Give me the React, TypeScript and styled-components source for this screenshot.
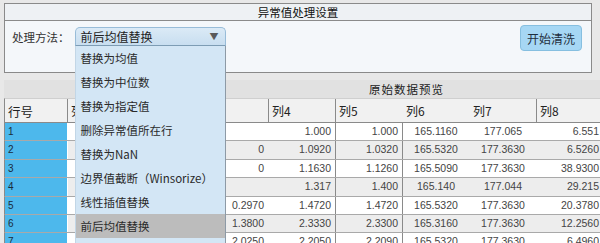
import React from 'react';
import styled, { createGlobalStyle } from 'styled-components';

const methods = [
  '替换为均值',
  '替换为中位数',
  '替换为指定值',
  '删除异常值所在行',
  '替换为NaN',
  '边界值截断（Winsorize）',
  '线性插值替换',
  '前后均值替换',
];

type Align = 'left' | 'center' | 'right';

const columns: { label: string; align: Align; headDivider: boolean; cellDivider: boolean }[] = [
  { label: '列1', align: 'right', headDivider: false, cellDivider: false },
  { label: '列2', align: 'right', headDivider: false, cellDivider: false },
  { label: '列3', align: 'right', headDivider: true, cellDivider: false },
  { label: '列4', align: 'right', headDivider: true, cellDivider: true },
  { label: '列5', align: 'right', headDivider: false, cellDivider: true },
  { label: '列6', align: 'center', headDivider: false, cellDivider: false },
  { label: '列7', align: 'center', headDivider: true, cellDivider: false },
  { label: '列8', align: 'right', headDivider: true, cellDivider: false },
  { label: '列9', align: 'right', headDivider: true, cellDivider: false },
  { label: '列10', align: 'right', headDivider: true, cellDivider: false },
  { label: '列11', align: 'right', headDivider: true, cellDivider: false },
];

// 列1、列2 被下拉列表遮住，这里只给出列3 ~ 列8
const rows: { id: string; values: string[] }[] = [
  { id: '1', values: ['', '1.000', '1.000', '165.1160', '177.065', '6.551'] },
  { id: '2', values: ['0', '1.0920', '1.0320', '165.5320', '177.3630', '6.5260'] },
  { id: '3', values: ['0', '1.1630', '1.1260', '165.5090', '177.3630', '38.9300'] },
  { id: '4', values: ['', '1.317', '1.400', '165.140', '177.044', '29.215'] },
  { id: '5', values: ['0.2970', '1.4720', '1.4720', '165.5320', '177.3630', '20.3780'] },
  { id: '6', values: ['1.3800', '2.3330', '2.3300', '165.3160', '177.3630', '12.2560'] },
  { id: '7', values: ['2.0250', '2.2050', '2.2090', '165.5320', '177.3630', '6.4960'] },
];

const cellValue = (values: string[], col: number) => (col < 2 ? '' : values[col - 2] ?? '');

const App: React.FC = () => {
  const selected = '前后均值替换';
  return (
    <>
      <GlobalStyle />
      <Page>
        <SettingsPanel>
          <PanelTitle>异常值处理设置</PanelTitle>
          <PanelBody>
            <FieldLabel>处理方法：</FieldLabel>
            <ComboWrap>
              <Combo>
                <span>{selected}</span>
                <Arrow>▼</Arrow>
              </Combo>
              <DropList>
                {methods.map((m) => (
                  <DropItem key={m} $active={m === selected}>
                    {m}
                  </DropItem>
                ))}
              </DropList>
            </ComboWrap>
            <Spacer />
            <StartButton>开始清洗</StartButton>
          </PanelBody>
        </SettingsPanel>

        <TableSection>
          <SectionTitle>原始数据预览</SectionTitle>
          <HeaderRow>
            <RowHeadCell>行号</RowHeadCell>
            {columns.map((c) => (
              <HeadCell key={c.label} $divider={c.headDivider}>
                {c.label}
              </HeadCell>
            ))}
          </HeaderRow>
          {rows.map((r, i) => (
            <DataRow key={r.id} $alt={i % 2 === 1}>
              <RowLabel>{r.id}</RowLabel>
              {columns.map((c, j) => (
                <DataCell key={c.label} $align={c.align} $divider={c.cellDivider}>
                  {cellValue(r.values, j)}
                </DataCell>
              ))}
            </DataRow>
          ))}
        </TableSection>
      </Page>
    </>
  );
};

export default App;

const GlobalStyle = createGlobalStyle`
  html, body {
    margin: 0;
    padding: 0;
    width: 600px;
    height: 243px;
    overflow: hidden;
    background: #e8e8e8;
    font-family: "Noto Sans CJK SC", "Noto Sans", sans-serif;
    color: #222;
  }
`;

const Page = styled.div`
  display: flex;
  flex-direction: column;
  gap: 7px;
  padding: 3px 0 0 4px;
`;

const SettingsPanel = styled.div`
  width: 588px;
  box-sizing: border-box;
  border: 1px solid #8a8a8a;
  background: #f4f7fa;
`;

const PanelTitle = styled.div`
  height: 16px;
  line-height: 16px;
  border-bottom: 1px solid #8a8a8a;
  background: #eef1f4;
  text-align: center;
  font-size: 11.5px;
  color: #111;
`;

const PanelBody = styled.div`
  height: 51px;
  display: flex;
  align-items: flex-start;
  padding: 0 9px 0 7px;
`;

const FieldLabel = styled.div`
  margin-top: 8px;
  font-size: 11.5px;
  line-height: 16px;
  color: #333;
`;

const ComboWrap = styled.div`
  position: relative;
  margin: 6px 0 0 5px;
  width: 151px;
`;

const Combo = styled.div`
  box-sizing: border-box;
  height: 19px;
  display: flex;
  align-items: center;
  justify-content: space-between;
  padding: 0 6px 0 5px;
  border: 1px solid #98bcd8;
  border-bottom-color: #7d9cb4;
  border-radius: 5px 5px 0 0;
  background: linear-gradient(#dbeaf6, #c8def0);
  font-size: 12px;
  color: #222;
`;

const Arrow = styled.span`
  font-size: 9px;
  color: #5a5a5a;
`;

const DropList = styled.div`
  position: absolute;
  top: 100%;
  left: 0;
  width: 151px;
  box-sizing: border-box;
  background: #d3e6f5;
  border-left: 1px solid #c2d6e6;
  border-right: 1px solid #8d9aa6;
  padding-bottom: 12px;
  z-index: 5;
`;

const DropItem = styled.div<{ $active: boolean }>`
  height: 24px;
  line-height: 24px;
  padding-left: 5px;
  font-size: 11.5px;
  color: #2a2a2a;
  background: ${(p) => (p.$active ? '#bcbcbc' : 'transparent')};
  white-space: nowrap;
`;

const Spacer = styled.div`
  flex: 1;
`;

const StartButton = styled.button`
  margin-top: 4px;
  width: 62px;
  height: 26px;
  border: 1px solid #86bfe0;
  border-radius: 4px;
  background: #a6d7f4;
  font-family: inherit;
  font-size: 12px;
  color: #1f2f3f;
  padding: 0;
`;

const TableSection = styled.div`
  width: 805px;
  display: flex;
  flex-direction: column;
`;

const SectionTitle = styled.div`
  height: 18px;
  line-height: 18px;
  background: #e1e1e1;
  text-align: center;
  font-size: 11.5px;
  color: #222;
  letter-spacing: 1px;
`;

const HeaderRow = styled.div`
  display: flex;
  height: 25px;
  box-sizing: border-box;
  border-top: 1px solid #cfcfcf;
  border-left: 1px solid #8a8a8a;
  border-bottom: 1px solid #8a8a8a;
  background: #f1f1f1;
`;

const RowHeadCell = styled.div`
  width: 63px;
  box-sizing: border-box;
  border-right: 1px solid #8a8a8a;
  padding: 3px 0 0 3px;
  font-size: 12.5px;
  color: #222;
`;

const HeadCell = styled.div<{ $divider: boolean }>`
  width: 67px;
  box-sizing: border-box;
  border-right: 1px solid ${(p) => (p.$divider ? '#8a8a8a' : 'transparent')};
  padding: 3px 0 0 3px;
  font-size: 12px;
  color: #222;
`;

const DataRow = styled.div<{ $alt: boolean }>`
  display: flex;
  height: 18.4px;
  box-sizing: border-box;
  border-left: 1px solid #8a8a8a;
  border-bottom: 1px solid #a9a9a9;
  background: ${(p) => (p.$alt ? '#ededed' : '#ffffff')};
`;

const RowLabel = styled.div`
  width: 63px;
  box-sizing: border-box;
  background: #4db8ec;
  border-right: 1px solid #ffffff;
  padding-left: 3px;
  font-family: "Liberation Sans", Arial, sans-serif;
  font-size: 10px;
  line-height: 17px;
  color: #1b2b3b;
`;

const DataCell = styled.div<{ $align: Align; $divider: boolean }>`
  width: 67px;
  box-sizing: border-box;
  border-right: 1px solid ${(p) => (p.$divider ? '#8a8a8a' : 'transparent')};
  padding: 0 4px;
  text-align: ${(p) => p.$align};
  font-family: "Liberation Sans", Arial, sans-serif;
  font-size: 10.5px;
  line-height: 17px;
  color: #444;
`;
